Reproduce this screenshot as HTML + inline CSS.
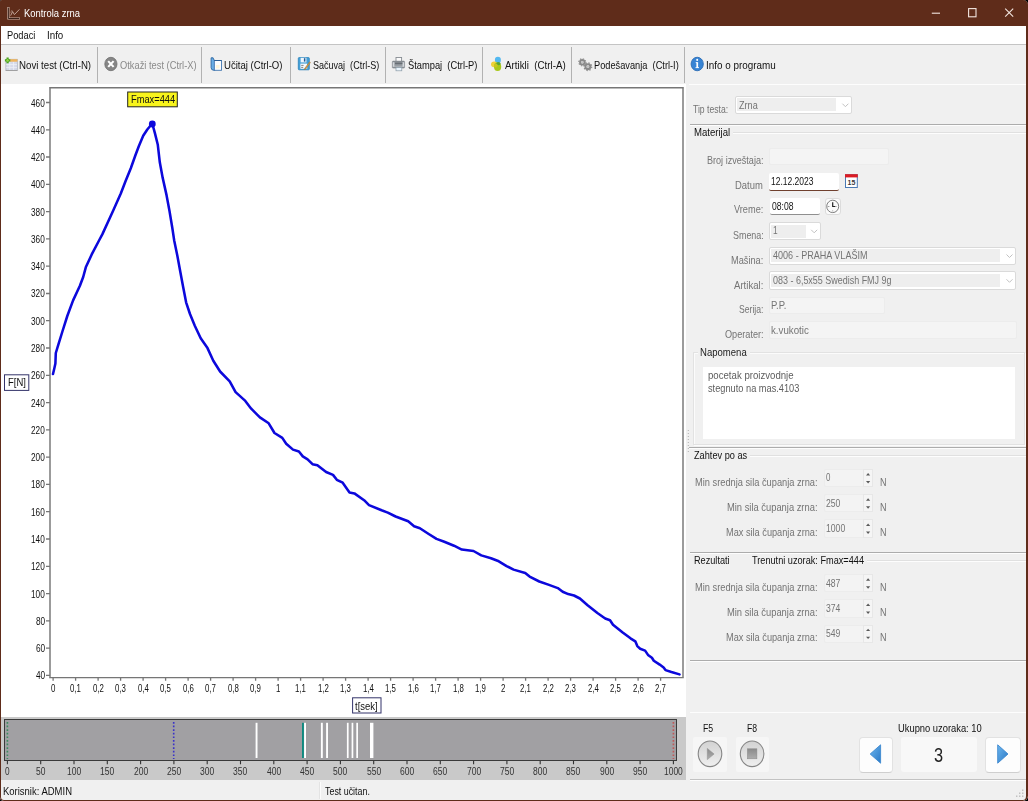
<!DOCTYPE html>
<html lang="sr"><head><meta charset="utf-8"><title>Kontrola zrna</title>
<style>
html,body{margin:0;padding:0;background:#000;}
body{width:1028px;height:801px;overflow:hidden;position:relative;font-family:"Liberation Sans", sans-serif;}
#win{position:absolute;left:0;top:0;width:1028px;height:801px;background:#f0f0f0;border-radius:2px 5px 5px 4px;overflow:hidden;}
.a{position:absolute;}
.t{position:absolute;white-space:pre;line-height:1;transform-origin:0 50%;display:block;}
.sep{position:absolute;top:47px;width:1px;height:36px;background:#b2b2b2;}
.cb{position:absolute;background:#fff;border:1px solid #dadada;box-sizing:border-box;border-radius:2px;}
.cb i{position:absolute;left:1.5px;top:1.5px;bottom:1.5px;background:#eeeeee;}
.fld{position:absolute;background:#f4f4f4;border:1px solid #ececec;box-sizing:border-box;border-radius:2px;}
.hl{position:absolute;height:1px;background:#acacac;}
.wl{position:absolute;height:1px;background:#fdfdfd;}
svg{position:absolute;left:0;top:0;overflow:visible;}
</style></head><body><div id="win">
<div class="a" style="left:0;top:0;width:1028px;height:26px;background:#5f2c1a"></div>
<div class="a" style="left:1px;top:26px;width:1026px;height:18px;background:#fff"></div>
<div class="a" style="left:1px;top:44px;width:1026px;height:1px;background:#c4c4c4"></div>
<div class="sep" style="left:97.3px"></div><div class="sep" style="left:201.0px"></div><div class="sep" style="left:290.3px"></div><div class="sep" style="left:384.7px"></div><div class="sep" style="left:482.2px"></div><div class="sep" style="left:571.2px"></div><div class="sep" style="left:683.5px"></div>
<div class="a" style="left:1px;top:84px;width:685px;height:633px;background:#fff"></div>
<div class="a" style="left:1px;top:717px;width:685px;height:63px;background:#c9c9c9"></div>
<div class="a" style="left:4px;top:719px;width:673px;height:42px;background:#a1a0a3;border:1px solid #3a3a3a;box-sizing:border-box"></div>
<div class="a" style="left:319px;top:782px;width:1px;height:17px;background:#e3e3e3"></div><div class="a" style="left:320px;top:782px;width:1px;height:17px;background:#fcfcfc"></div>
<div class="wl" style="left:689px;top:84px;width:337px"></div>
<div class="cb" style="left:734.5px;top:95.6px;width:117.7px;height:18.4px"><i style="width:99.1px"></i></div>
<div class="hl" style="left:690px;top:124px;width:336px"></div><div class="wl" style="left:690px;top:125px;width:336px"></div>
<div class="wl" style="left:733px;top:132px;width:293px;background:#e0e0e0"></div><div class="wl" style="left:733px;top:133px;width:293px"></div>
<div class="fld" style="left:768.5px;top:147.5px;width:120px;height:17.5px"></div>
<div class="a" style="left:768.5px;top:173px;width:70px;height:17.5px;background:#fff;border-radius:2px;border-bottom:1.5px solid #70402e;box-sizing:border-box"></div>
<div class="a" style="left:770px;top:197.7px;width:50px;height:17.5px;background:#fff;border-radius:2px;border-bottom:1.5px solid #8f8f8f;box-sizing:border-box"></div>
<div class="a" style="left:825px;top:198px;width:15.5px;height:17.2px;background:#fbfbfb;border:1px solid #dcdcdc;border-radius:3px;box-sizing:border-box"></div>
<div class="cb" style="left:768.5px;top:222.0px;width:52.9px;height:18.2px"><i style="width:34.5px"></i></div>
<div class="cb" style="left:768.5px;top:246.6px;width:247.8px;height:18.4px"><i style="width:228.7px"></i></div>
<div class="cb" style="left:768.5px;top:271.3px;width:247.8px;height:18.5px"><i style="width:228.7px"></i></div>
<div class="fld" style="left:768.5px;top:296.8px;width:116px;height:17.5px"></div>
<div class="fld" style="left:768.5px;top:321px;width:248px;height:17.5px"></div>
<div class="a" style="left:693px;top:352px;width:331.5px;height:93px;border:1px solid #e2e2e2;box-sizing:border-box;box-shadow:1px 1px 0 #fbfbfb, inset 1px 1px 0 #fbfbfb"></div>
<div class="a" style="left:698px;top:346px;width:52px;height:13px;background:#f0f0f0"></div>
<div class="a" style="left:703.3px;top:366.8px;width:311.3px;height:72.2px;background:#fff"></div>
<div class="hl" style="left:689px;top:447px;width:337px"></div><div class="wl" style="left:689px;top:448px;width:337px"></div>
<div class="wl" style="left:750px;top:455px;width:276px;background:#e0e0e0"></div><div class="wl" style="left:750px;top:456px;width:276px"></div>
<div class="fld" style="left:823.7px;top:468.8px;width:49.8px;height:18.3px;background:#f3f3f3;border-color:#ececec"></div>
<div class="a" style="left:862.8px;top:468.8px;width:10.6px;height:18.3px;background:#f5f5f5;border:1px solid #e7e7e7;box-sizing:border-box"></div>
<div class="fld" style="left:823.7px;top:494.1px;width:49.8px;height:18.3px;background:#f3f3f3;border-color:#ececec"></div>
<div class="a" style="left:862.8px;top:494.1px;width:10.6px;height:18.3px;background:#f5f5f5;border:1px solid #e7e7e7;box-sizing:border-box"></div>
<div class="fld" style="left:823.7px;top:519.4px;width:49.8px;height:18.3px;background:#f3f3f3;border-color:#ececec"></div>
<div class="a" style="left:862.8px;top:519.4px;width:10.6px;height:18.3px;background:#f5f5f5;border:1px solid #e7e7e7;box-sizing:border-box"></div>
<div class="fld" style="left:823.7px;top:574.1px;width:49.8px;height:18.3px;background:#f3f3f3;border-color:#ececec"></div>
<div class="a" style="left:862.8px;top:574.1px;width:10.6px;height:18.3px;background:#f5f5f5;border:1px solid #e7e7e7;box-sizing:border-box"></div>
<div class="fld" style="left:823.7px;top:599.4px;width:49.8px;height:18.3px;background:#f3f3f3;border-color:#ececec"></div>
<div class="a" style="left:862.8px;top:599.4px;width:10.6px;height:18.3px;background:#f5f5f5;border:1px solid #e7e7e7;box-sizing:border-box"></div>
<div class="fld" style="left:823.7px;top:624.5px;width:49.8px;height:18.3px;background:#f3f3f3;border-color:#ececec"></div>
<div class="a" style="left:862.8px;top:624.5px;width:10.6px;height:18.3px;background:#f5f5f5;border:1px solid #e7e7e7;box-sizing:border-box"></div>
<div class="hl" style="left:690px;top:552px;width:336px"></div><div class="wl" style="left:690px;top:553px;width:336px"></div>
<div class="wl" style="left:867px;top:560px;width:159px;background:#e0e0e0"></div><div class="wl" style="left:867px;top:561px;width:159px"></div>
<div class="hl" style="left:690px;top:660px;width:336px"></div><div class="wl" style="left:690px;top:661px;width:336px"></div>
<div class="wl" style="left:690px;top:712px;width:336px"></div>
<div class="hl" style="left:690px;top:779px;width:336px;background:#c2c2c2"></div><div class="wl" style="left:690px;top:780px;width:336px"></div>
<div class="a" style="left:1025.5px;top:84px;width:1px;height:696px;background:#fafafa"></div>
<div class="a" style="left:693.3px;top:737px;width:33.9px;height:35.2px;background:#f6f6f6;border-radius:2px"></div>
<div class="a" style="left:735.6px;top:737px;width:33.4px;height:35.2px;background:#f6f6f6;border-radius:2px"></div>
<div class="a" style="left:858.7px;top:736.6px;width:34.5px;height:36.4px;background:#fdfdfd;border:1px solid #e2e2e2;border-bottom-color:#cfcfcf;border-radius:4px;box-sizing:border-box"></div>
<div class="a" style="left:901px;top:736.6px;width:75.8px;height:35.8px;background:#f8f8f8;border-radius:3px"></div>
<div class="a" style="left:985.2px;top:736.6px;width:35.4px;height:36.4px;background:#fdfdfd;border:1px solid #e2e2e2;border-bottom-color:#cfcfcf;border-radius:4px;box-sizing:border-box"></div>
<svg width="1028" height="801" viewBox="0 0 1028 801">
<g fill="none"><path d="M8.4 7V18.5H20" stroke="#cfb6ab" stroke-width="2.2"/><path d="M8.4 7.6V18.5H19.4" stroke="#2a120a" stroke-width="0.9"/><path d="M10.6 15.6L12.6 11.6L14.4 14.6L19.4 9.4" stroke="#c9aea3" stroke-width="0.9"/><path d="M10.6 12.6L11.8 10.4L13 12.4" stroke="#a88a7e" stroke-width="0.7"/></g>
<g fill="none" stroke="#f3e6e0" stroke-width="1.1"><path d="M931.8 13.2H940"/><rect x="968.6" y="8.6" width="7.4" height="8.2"/><path d="M1005.2 8.7L1013.2 16.7M1013.2 8.7L1005.2 16.7"/></g>
<g fill="none" stroke="#767676" stroke-width="1.45"><path d="M50 87.8V677.6M49.2 87.8H683.8M683 87.8V677.6M49.2 677.6H683.8"/></g>
<path d="M46 675.4H50M46 648.1H50M46 620.8H50M46 593.6H50M46 566.3H50M46 539.0H50M46 511.7H50M46 484.4H50M46 457.1H50M46 429.9H50M46 402.6H50M46 375.3H50M46 348.0H50M46 320.7H50M46 293.5H50M46 266.2H50M46 238.9H50M46 211.6H50M46 184.3H50M46 157.0H50M46 129.8H50M46 102.5H50M53.1 677.6V680.8M75.6 677.6V680.8M98.1 677.6V680.8M120.6 677.6V680.8M143.1 677.6V680.8M165.6 677.6V680.8M188.1 677.6V680.8M210.6 677.6V680.8M233.1 677.6V680.8M255.6 677.6V680.8M278.1 677.6V680.8M300.6 677.6V680.8M323.1 677.6V680.8M345.6 677.6V680.8M368.1 677.6V680.8M390.6 677.6V680.8M413.1 677.6V680.8M435.6 677.6V680.8M458.1 677.6V680.8M480.6 677.6V680.8M503.1 677.6V680.8M525.6 677.6V680.8M548.1 677.6V680.8M570.6 677.6V680.8M593.1 677.6V680.8M615.6 677.6V680.8M638.1 677.6V680.8M660.6 677.6V680.8" fill="none" stroke="#767676" stroke-width="1.3"/>
<path d="M53.0 374.0 L54.3 368.5 L55.4 363.5 L55.8 353.0 L58.5 344.2 L62.4 331.5 L67.3 316.0 L73.1 300.4 L79.9 285.8 L83.2 277.0 L85.8 267.3 L91.6 254.7 L99.3 240.0 L102.3 234.4 L113.0 211.0 L120.8 193.5 L125.7 180.8 L130.8 168.2 L135.5 155.0 L138.8 146.2 L143.2 135.8 L147.3 129.5 L150.8 125.3 L152.4 124.0 L154.9 133.1 L157.8 144.8 L159.8 162.3 L162.7 177.9 L166.6 195.4 L169.5 211.0 L172.4 228.5 L174.2 240.5 L177.3 255.6 L180.2 271.2 L183.1 286.7 L186.1 302.3 L190.0 314.0 L194.8 325.7 L200.7 338.3 L207.5 348.1 L213.3 360.7 L220.1 371.5 L229.7 381.4 L235.6 392.1 L245.3 400.9 L251.2 408.7 L259.9 417.4 L268.7 423.3 L274.5 433.0 L282.3 437.9 L286.2 443.7 L293.0 449.6 L298.9 451.5 L302.8 456.4 L307.6 459.3 L312.5 464.2 L317.4 465.2 L326.1 472.0 L333.0 474.9 L336.8 479.8 L342.7 482.7 L349.5 492.4 L354.4 493.4 L364.1 500.2 L369.0 505.1 L381.6 510.3 L387.8 512.6 L395.6 516.5 L408.2 521.3 L414.1 526.2 L419.9 528.2 L428.7 534.0 L436.5 538.9 L444.3 541.8 L454.0 545.7 L461.8 549.6 L473.5 551.0 L481.3 555.4 L491.0 558.3 L498.8 561.3 L506.6 566.1 L513.6 569.6 L525.2 573.0 L529.6 576.6 L539.3 581.5 L549.0 584.9 L557.8 588.1 L562.7 591.8 L568.2 594.1 L574.0 595.5 L579.9 598.5 L587.6 605.2 L597.4 613.0 L605.2 618.5 L610.0 620.2 L613.0 624.7 L622.7 632.5 L630.5 638.3 L635.3 641.3 L637.3 646.1 L640.2 648.7 L645.1 650.6 L648.0 654.9 L651.9 657.8 L653.8 660.7 L659.7 664.6 L663.6 667.5 L665.5 670.1 L671.4 672.0 L679.5 674.4" fill="none" stroke="#0c08dc" stroke-width="2.55" stroke-linejoin="round" stroke-linecap="round"/>
<circle cx="152.3" cy="124" r="3.4" fill="#0c08dc"/>
<rect x="127.7" y="92" width="49.6" height="14.8" fill="#f8f41c" stroke="#222" stroke-width="1"/>
<rect x="4.5" y="374.8" width="24.3" height="15.6" fill="#fff" stroke="#33336a" stroke-width="1"/>
<rect x="352.6" y="697.8" width="28.4" height="15.2" fill="#fff" stroke="#33336a" stroke-width="1"/>
<path d="M7.4 761V764.3M40.7 761V764.3M74.0 761V764.3M107.3 761V764.3M140.6 761V764.3M173.9 761V764.3M207.2 761V764.3M240.5 761V764.3M273.8 761V764.3M307.1 761V764.3M340.4 761V764.3M373.7 761V764.3M407.0 761V764.3M440.3 761V764.3M473.6 761V764.3M506.9 761V764.3M540.2 761V764.3M573.5 761V764.3M606.8 761V764.3M640.1 761V764.3M673.4 761V764.3" fill="none" stroke="#333" stroke-width="1.1"/>
<rect x="255.6" y="722.8" width="1.9" height="35.2" fill="#fff"/>
<rect x="302.0" y="722.8" width="1.9" height="35.2" fill="#0e8a80"/>
<rect x="304.1" y="722.8" width="1.9" height="35.2" fill="#fff"/>
<rect x="320.9" y="722.8" width="1.9" height="35.2" fill="#fff"/>
<rect x="326.1" y="722.8" width="1.9" height="35.2" fill="#fff"/>
<rect x="346.9" y="722.8" width="1.7" height="35.2" fill="#fff"/>
<rect x="351.6" y="722.8" width="1.7" height="35.2" fill="#fff"/>
<rect x="356.3" y="722.8" width="1.7" height="35.2" fill="#fff"/>
<rect x="370.0" y="722.8" width="3.4" height="35.2" fill="#fff"/>
<path d="M7.4 722V759" stroke="#3c8c60" stroke-width="1.6" stroke-dasharray="1.7 1.9" fill="none"/>
<path d="M173.7 722V759" stroke="#3a32c8" stroke-width="1.6" stroke-dasharray="1.7 1.9" fill="none"/>
<path d="M673.4 722V759" stroke="#c05858" stroke-width="1.6" stroke-dasharray="1.7 1.9" fill="none"/>
<path d="M688.3 430V452" stroke="#b0b0b0" stroke-width="1" stroke-dasharray="1 2" fill="none"/>
<g><rect x="5.9" y="59.3" width="11.4" height="11" fill="#d6daea" stroke="#aeb2bc" stroke-width="0.8"/><rect x="9.6" y="59.2" width="7.8" height="2.5" fill="#efb45c"/><path d="M6.2 64.6H17M6.2 67.4H17M9.8 62V70M13.6 62V70" stroke="#eef0f6" stroke-width="0.8" fill="none"/><path d="M5.7 70.5H17.5" stroke="#9c9c9c" stroke-width="0.9"/><path d="M4.9 60.4H10.3M7.6 57.6V63.2" stroke="#4aa41e" stroke-width="2.2" fill="none"/><path d="M6.2 60.4H9M7.6 59V61.8" stroke="#9ad84a" stroke-width="0.9" fill="none"/></g>
<g><ellipse cx="110.9" cy="64" rx="6.1" ry="6.7" fill="#868686" stroke="#6e6e6e" stroke-width="0.8"/><path d="M108.2 61.1L113.6 66.9M113.6 61.1L108.2 66.9" stroke="#fff" stroke-width="2.1" fill="none"/></g>
<g><path d="M211.1 57.8V67.6Q211.1 70.3 214 70.3H215V60.5Q213.4 60.3 213.1 57.8Z" fill="#69aee6" stroke="#2d66a0" stroke-width="0.9" stroke-linejoin="round"/><rect x="214.3" y="60.5" width="7.2" height="9.8" fill="#fbfdff" stroke="#4176b0" stroke-width="0.9"/><path d="M214.3 60.5H221.5" stroke="#2d5f94" stroke-width="1"/><rect x="216" y="65" width="3.6" height="3.4" fill="#fdf6dc"/></g>
<g><rect x="298.3" y="57.6" width="11" height="12.2" rx="0.8" fill="#43a0d8" stroke="#2a82ba" stroke-width="0.8"/><rect x="300.6" y="57.8" width="5.8" height="4.6" fill="#eef6fc"/><rect x="303.9" y="58.2" width="1.5" height="3.4" fill="#245a94"/><rect x="300.4" y="63.6" width="6.8" height="5.2" fill="#f6fafd"/><path d="M301.2 65.4H303.6M301.2 67.4H303.2" stroke="#666" stroke-width="0.8"/><path d="M309.6 61.8L305 68L304.2 69.6L305.8 69L310.4 62.6Z" fill="#d9a24a" stroke="#9c6a2c" stroke-width="0.5"/></g>
<g><rect x="396" y="57.5" width="5.6" height="4.4" fill="#fbfbfb" stroke="#868c92" stroke-width="0.9"/><rect x="392.3" y="61.1" width="12.3" height="7" rx="0.8" fill="#8b9197" stroke="#787e84" stroke-width="0.5"/><rect x="392.8" y="62.2" width="1.6" height="4.6" fill="#d4d8dc"/><rect x="402.5" y="62.2" width="1.6" height="4.6" fill="#d4d8dc"/><path d="M395 63.3H402.4" stroke="#5a6066" stroke-width="0.9"/><path d="M394 66.2H403" stroke="#c9cdd1" stroke-width="0.7"/><rect x="396" y="67.4" width="5.8" height="3.4" fill="#eaf4fc" stroke="#8a9aa6" stroke-width="0.7"/></g>
<g><ellipse cx="497.9" cy="60" rx="3" ry="3.2" fill="#52b8f0"/><ellipse cx="494.2" cy="64.3" rx="3.2" ry="2.9" fill="#efd13a"/><ellipse cx="497.6" cy="66.8" rx="3.6" ry="4.2" fill="#a9c81a"/><ellipse cx="498.4" cy="63.6" rx="2.2" ry="1.6" fill="#4f9e3a" opacity="0.85"/><ellipse cx="495.8" cy="65.6" rx="1.8" ry="2" fill="#c9c61e"/></g>
<g fill="none"><circle cx="582.3" cy="62.3" r="2.2" stroke="#8a8a8a" stroke-width="2"/><circle cx="582.3" cy="62.3" r="3.5" stroke="#8f8f8f" stroke-width="1.2" stroke-dasharray="1.3 1.45"/><circle cx="582.3" cy="62.3" r="1.2" fill="#c2c2c2" stroke="none"/><circle cx="587.9" cy="66.7" r="2.4" stroke="#8a8a8a" stroke-width="2.1"/><circle cx="587.9" cy="66.7" r="3.8" stroke="#8f8f8f" stroke-width="1.3" stroke-dasharray="1.4 1.58"/><circle cx="587.9" cy="66.7" r="1.4" fill="#c2c2c2" stroke="none"/></g>
<g><ellipse cx="697.2" cy="64" rx="6.1" ry="6.75" fill="#3884d4" stroke="#2a6cb4" stroke-width="0.9"/><rect x="696.4" y="62.2" width="1.7" height="5.6" fill="#fff"/><rect x="695.7" y="62.2" width="1.6" height="0.9" fill="#fff"/><rect x="695.5" y="67.2" width="3.5" height="0.9" fill="#fff"/><ellipse cx="697.2" cy="59.9" rx="1" ry="1.1" fill="#fff"/></g>
<path d="M842.4 103.7L845.4 106.7L848.4 103.7" fill="none" stroke="#c2c2c2" stroke-width="1"/>
<path d="M811.2 229.8L814.2 232.8L817.2 229.8" fill="none" stroke="#c2c2c2" stroke-width="1"/>
<path d="M1006.5 254.5L1009.5 257.5L1012.5 254.5" fill="none" stroke="#c2c2c2" stroke-width="1"/>
<path d="M1006.5 279.3L1009.5 282.3L1012.5 279.3" fill="none" stroke="#c2c2c2" stroke-width="1"/>
<g><rect x="845.5" y="174.7" width="11.8" height="12.8" fill="#fff" stroke="#4a7ab4" stroke-width="1"/><rect x="845" y="174.2" width="12.8" height="3.2" fill="#dc1c24"/></g>
<text x="851.5" y="184.7" font-family='"Liberation Sans", sans-serif' font-size="7.4" font-weight="bold" fill="#3a3a3a" text-anchor="middle" textLength="7.8" lengthAdjust="spacingAndGlyphs">15</text>
<g fill="none"><ellipse cx="832.7" cy="206.4" rx="6" ry="6.2" stroke="#707070" stroke-width="0.9"/><path d="M832.7 202.2V206.5H835" stroke="#222" stroke-width="1.2"/><path d="M835 206.5H836.6M827.6 206.5H829.4M832.7 210.4V211.4" stroke="#777" stroke-width="0.7"/></g>
<path d="M866 475.4L868.1 473.0L870.2 475.4Z" fill="#5a5a5a"/>
<path d="M866 481.0L868.1 483.4L870.2 481.0Z" fill="#5a5a5a"/>
<path d="M866 500.7L868.1 498.3L870.2 500.7Z" fill="#5a5a5a"/>
<path d="M866 506.3L868.1 508.7L870.2 506.3Z" fill="#5a5a5a"/>
<path d="M866 526.0L868.1 523.6L870.2 526.0Z" fill="#5a5a5a"/>
<path d="M866 531.6L868.1 534.0L870.2 531.6Z" fill="#5a5a5a"/>
<path d="M866 580.7L868.1 578.3L870.2 580.7Z" fill="#5a5a5a"/>
<path d="M866 586.3L868.1 588.7L870.2 586.3Z" fill="#5a5a5a"/>
<path d="M866 606.0L868.1 603.6L870.2 606.0Z" fill="#5a5a5a"/>
<path d="M866 611.6L868.1 614.0L870.2 611.6Z" fill="#5a5a5a"/>
<path d="M866 631.1L868.1 628.7L870.2 631.1Z" fill="#5a5a5a"/>
<path d="M866 636.7L868.1 639.1L870.2 636.7Z" fill="#5a5a5a"/>
<defs><linearGradient id="gb" x1="0" y1="0" x2="0" y2="1"><stop offset="0" stop-color="#d2d2d2"/><stop offset="1" stop-color="#efefef"/></linearGradient><linearGradient id="gd" x1="0" y1="0" x2="0" y2="1"><stop offset="0" stop-color="#8a8a8a"/><stop offset="1" stop-color="#adadad"/></linearGradient><linearGradient id="bl" x1="0" y1="0" x2="1" y2="1"><stop offset="0" stop-color="#6cb6ee"/><stop offset="1" stop-color="#2a78c6"/></linearGradient></defs>
<ellipse cx="710" cy="753.8" rx="11.8" ry="12.8" fill="url(#gb)" stroke="#858585" stroke-width="1.1"/>
<path d="M707.3 748.4L714.1 754L707.3 759.6Z" fill="url(#gd)" stroke="#8f8f8f" stroke-width="0.5"/>
<ellipse cx="752.1" cy="753.8" rx="11.8" ry="12.8" fill="url(#gb)" stroke="#858585" stroke-width="1.1"/>
<rect x="747.4" y="748.8" width="9.5" height="10" fill="url(#gd)" stroke="#888" stroke-width="0.5"/>
<path d="M870.2 754L880.6 744.8V763.2Z" fill="url(#bl)" stroke="#3f8ad0" stroke-width="0.9" stroke-linejoin="round"/>
<path d="M1008 754L997.7 744.8V763.2Z" fill="url(#bl)" stroke="#3f8ad0" stroke-width="0.9" stroke-linejoin="round"/>
<g fill="#bdbdbd"><rect x="1022" y="795.5" width="1.4" height="1.4"/><rect x="1019" y="795.5" width="1.4" height="1.4"/><rect x="1016" y="795.5" width="1.4" height="1.4"/><rect x="1022" y="792.5" width="1.4" height="1.4"/><rect x="1019" y="792.5" width="1.4" height="1.4"/><rect x="1022" y="789.5" width="1.4" height="1.4"/></g>
</svg>
<div id="txt" style="position:absolute;left:0;top:0;width:1028px;height:801px;will-change:transform">
<span class="t" id="t0" style="left:24.30px;top:7.73px;font-size:11px;color:#fff;transform:scaleX(0.8558);">Kontrola zrna</span>
<span class="t" id="t1" style="left:6.60px;top:29.53px;font-size:11px;color:#111;transform:scaleX(0.8442);">Podaci</span>
<span class="t" id="t2" style="left:46.70px;top:29.53px;font-size:11px;color:#111;transform:scaleX(0.8878);">Info</span>
<span class="t" id="t3" style="left:19.40px;top:59.63px;font-size:11px;color:#111;transform:scaleX(0.8804);">Novi test (Ctrl-N)</span>
<span class="t" id="t4" style="left:119.70px;top:59.63px;font-size:11px;color:#8a8a8a;transform:scaleX(0.8468);">Otkaži test (Ctrl-X)</span>
<span class="t" id="t5" style="left:223.70px;top:59.63px;font-size:11px;color:#111;transform:scaleX(0.8703);">Učitaj (Ctrl-O)</span>
<span class="t" id="t6" style="left:312.90px;top:59.63px;font-size:11px;color:#111;transform:scaleX(0.8204);">Sačuvaj  (Ctrl-S)</span>
<span class="t" id="t7" style="left:407.50px;top:59.63px;font-size:11px;color:#111;transform:scaleX(0.8473);">Štampaj  (Ctrl-P)</span>
<span class="t" id="t8" style="left:505.00px;top:59.63px;font-size:11px;color:#111;transform:scaleX(0.8869);">Artikli  (Ctrl-A)</span>
<span class="t" id="t9" style="left:593.75px;top:59.63px;font-size:11px;color:#111;transform:scaleX(0.8401);">Podešavanja  (Ctrl-I)</span>
<span class="t" id="t10" style="left:706.00px;top:59.63px;font-size:11px;color:#111;transform:scaleX(0.8982);">Info o programu</span>
<span class="t" id="t11" style="left:35.70px;top:670.43px;font-size:11px;color:#111;transform:scaleX(0.7510);">40</span>
<span class="t" id="t12" style="left:35.70px;top:643.14px;font-size:11px;color:#111;transform:scaleX(0.7510);">60</span>
<span class="t" id="t13" style="left:35.70px;top:615.86px;font-size:11px;color:#111;transform:scaleX(0.7510);">80</span>
<span class="t" id="t14" style="left:31.15px;top:588.58px;font-size:11px;color:#111;transform:scaleX(0.7489);">100</span>
<span class="t" id="t15" style="left:31.15px;top:561.30px;font-size:11px;color:#111;transform:scaleX(0.7489);">120</span>
<span class="t" id="t16" style="left:31.15px;top:534.02px;font-size:11px;color:#111;transform:scaleX(0.7489);">140</span>
<span class="t" id="t17" style="left:31.15px;top:506.73px;font-size:11px;color:#111;transform:scaleX(0.7489);">160</span>
<span class="t" id="t18" style="left:31.15px;top:479.45px;font-size:11px;color:#111;transform:scaleX(0.7489);">180</span>
<span class="t" id="t19" style="left:31.15px;top:452.17px;font-size:11px;color:#111;transform:scaleX(0.7489);">200</span>
<span class="t" id="t20" style="left:31.15px;top:424.89px;font-size:11px;color:#111;transform:scaleX(0.7489);">220</span>
<span class="t" id="t21" style="left:31.15px;top:397.61px;font-size:11px;color:#111;transform:scaleX(0.7489);">240</span>
<span class="t" id="t22" style="left:31.15px;top:370.32px;font-size:11px;color:#111;transform:scaleX(0.7489);">260</span>
<span class="t" id="t23" style="left:31.15px;top:343.04px;font-size:11px;color:#111;transform:scaleX(0.7489);">280</span>
<span class="t" id="t24" style="left:31.15px;top:315.76px;font-size:11px;color:#111;transform:scaleX(0.7489);">300</span>
<span class="t" id="t25" style="left:31.15px;top:288.48px;font-size:11px;color:#111;transform:scaleX(0.7489);">320</span>
<span class="t" id="t26" style="left:31.15px;top:261.20px;font-size:11px;color:#111;transform:scaleX(0.7489);">340</span>
<span class="t" id="t27" style="left:31.15px;top:233.91px;font-size:11px;color:#111;transform:scaleX(0.7489);">360</span>
<span class="t" id="t28" style="left:31.15px;top:206.63px;font-size:11px;color:#111;transform:scaleX(0.7489);">380</span>
<span class="t" id="t29" style="left:31.15px;top:179.35px;font-size:11px;color:#111;transform:scaleX(0.7489);">400</span>
<span class="t" id="t30" style="left:31.15px;top:152.07px;font-size:11px;color:#111;transform:scaleX(0.7489);">420</span>
<span class="t" id="t31" style="left:31.15px;top:124.79px;font-size:11px;color:#111;transform:scaleX(0.7489);">440</span>
<span class="t" id="t32" style="left:31.15px;top:97.50px;font-size:11px;color:#111;transform:scaleX(0.7489);">460</span>
<span class="t" id="t33" style="left:50.90px;top:682.93px;font-size:11px;color:#111;transform:scaleX(0.7184);">0</span>
<span class="t" id="t34" style="left:70.15px;top:682.93px;font-size:11px;color:#111;transform:scaleX(0.7126);">0,1</span>
<span class="t" id="t35" style="left:92.65px;top:682.93px;font-size:11px;color:#111;transform:scaleX(0.7126);">0,2</span>
<span class="t" id="t36" style="left:115.15px;top:682.93px;font-size:11px;color:#111;transform:scaleX(0.7126);">0,3</span>
<span class="t" id="t37" style="left:137.65px;top:682.93px;font-size:11px;color:#111;transform:scaleX(0.7126);">0,4</span>
<span class="t" id="t38" style="left:160.15px;top:682.93px;font-size:11px;color:#111;transform:scaleX(0.7126);">0,5</span>
<span class="t" id="t39" style="left:182.65px;top:682.93px;font-size:11px;color:#111;transform:scaleX(0.7126);">0,6</span>
<span class="t" id="t40" style="left:205.15px;top:682.93px;font-size:11px;color:#111;transform:scaleX(0.7126);">0,7</span>
<span class="t" id="t41" style="left:227.65px;top:682.93px;font-size:11px;color:#111;transform:scaleX(0.7126);">0,8</span>
<span class="t" id="t42" style="left:250.15px;top:682.93px;font-size:11px;color:#111;transform:scaleX(0.7126);">0,9</span>
<span class="t" id="t43" style="left:275.90px;top:682.93px;font-size:11px;color:#111;transform:scaleX(0.7184);">1</span>
<span class="t" id="t44" style="left:295.15px;top:682.93px;font-size:11px;color:#111;transform:scaleX(0.7126);">1,1</span>
<span class="t" id="t45" style="left:317.65px;top:682.93px;font-size:11px;color:#111;transform:scaleX(0.7126);">1,2</span>
<span class="t" id="t46" style="left:340.15px;top:682.93px;font-size:11px;color:#111;transform:scaleX(0.7126);">1,3</span>
<span class="t" id="t47" style="left:362.65px;top:682.93px;font-size:11px;color:#111;transform:scaleX(0.7126);">1,4</span>
<span class="t" id="t48" style="left:385.15px;top:682.93px;font-size:11px;color:#111;transform:scaleX(0.7126);">1,5</span>
<span class="t" id="t49" style="left:407.65px;top:682.93px;font-size:11px;color:#111;transform:scaleX(0.7126);">1,6</span>
<span class="t" id="t50" style="left:430.15px;top:682.93px;font-size:11px;color:#111;transform:scaleX(0.7126);">1,7</span>
<span class="t" id="t51" style="left:452.65px;top:682.93px;font-size:11px;color:#111;transform:scaleX(0.7126);">1,8</span>
<span class="t" id="t52" style="left:475.15px;top:682.93px;font-size:11px;color:#111;transform:scaleX(0.7126);">1,9</span>
<span class="t" id="t53" style="left:500.90px;top:682.93px;font-size:11px;color:#111;transform:scaleX(0.7184);">2</span>
<span class="t" id="t54" style="left:520.15px;top:682.93px;font-size:11px;color:#111;transform:scaleX(0.7126);">2,1</span>
<span class="t" id="t55" style="left:542.65px;top:682.93px;font-size:11px;color:#111;transform:scaleX(0.7126);">2,2</span>
<span class="t" id="t56" style="left:565.15px;top:682.93px;font-size:11px;color:#111;transform:scaleX(0.7126);">2,3</span>
<span class="t" id="t57" style="left:587.65px;top:682.93px;font-size:11px;color:#111;transform:scaleX(0.7126);">2,4</span>
<span class="t" id="t58" style="left:610.15px;top:682.93px;font-size:11px;color:#111;transform:scaleX(0.7126);">2,5</span>
<span class="t" id="t59" style="left:632.65px;top:682.93px;font-size:11px;color:#111;transform:scaleX(0.7126);">2,6</span>
<span class="t" id="t60" style="left:655.15px;top:682.93px;font-size:11px;color:#111;transform:scaleX(0.7126);">2,7</span>
<span class="t" id="t61" style="left:7.75px;top:377.13px;font-size:11px;color:#111;transform:scaleX(0.8589);">F[N]</span>
<span class="t" id="t62" style="left:355.40px;top:700.63px;font-size:11px;color:#111;transform:scaleX(0.8632);">t[sek]</span>
<span class="t" id="t63" style="left:130.60px;top:94.13px;font-size:11px;color:#111;transform:scaleX(0.8445);">Fmax=444</span>
<span class="t" id="t64" style="left:5.10px;top:766.13px;font-size:11px;color:#333;transform:scaleX(0.7510);">0</span>
<span class="t" id="t65" style="left:36.00px;top:766.13px;font-size:11px;color:#333;transform:scaleX(0.7673);">50</span>
<span class="t" id="t66" style="left:66.90px;top:766.13px;font-size:11px;color:#333;transform:scaleX(0.7734);">100</span>
<span class="t" id="t67" style="left:100.20px;top:766.13px;font-size:11px;color:#333;transform:scaleX(0.7734);">150</span>
<span class="t" id="t68" style="left:133.50px;top:766.13px;font-size:11px;color:#333;transform:scaleX(0.7734);">200</span>
<span class="t" id="t69" style="left:166.80px;top:766.13px;font-size:11px;color:#333;transform:scaleX(0.7734);">250</span>
<span class="t" id="t70" style="left:200.10px;top:766.13px;font-size:11px;color:#333;transform:scaleX(0.7734);">300</span>
<span class="t" id="t71" style="left:233.40px;top:766.13px;font-size:11px;color:#333;transform:scaleX(0.7734);">350</span>
<span class="t" id="t72" style="left:266.70px;top:766.13px;font-size:11px;color:#333;transform:scaleX(0.7734);">400</span>
<span class="t" id="t73" style="left:300.00px;top:766.13px;font-size:11px;color:#333;transform:scaleX(0.7734);">450</span>
<span class="t" id="t74" style="left:333.30px;top:766.13px;font-size:11px;color:#333;transform:scaleX(0.7734);">500</span>
<span class="t" id="t75" style="left:366.60px;top:766.13px;font-size:11px;color:#333;transform:scaleX(0.7734);">550</span>
<span class="t" id="t76" style="left:399.90px;top:766.13px;font-size:11px;color:#333;transform:scaleX(0.7734);">600</span>
<span class="t" id="t77" style="left:433.20px;top:766.13px;font-size:11px;color:#333;transform:scaleX(0.7734);">650</span>
<span class="t" id="t78" style="left:466.50px;top:766.13px;font-size:11px;color:#333;transform:scaleX(0.7734);">700</span>
<span class="t" id="t79" style="left:499.80px;top:766.13px;font-size:11px;color:#333;transform:scaleX(0.7734);">750</span>
<span class="t" id="t80" style="left:533.10px;top:766.13px;font-size:11px;color:#333;transform:scaleX(0.7734);">800</span>
<span class="t" id="t81" style="left:566.40px;top:766.13px;font-size:11px;color:#333;transform:scaleX(0.7734);">850</span>
<span class="t" id="t82" style="left:599.70px;top:766.13px;font-size:11px;color:#333;transform:scaleX(0.7734);">900</span>
<span class="t" id="t83" style="left:633.00px;top:766.13px;font-size:11px;color:#333;transform:scaleX(0.7734);">950</span>
<span class="t" id="t84" style="left:664.00px;top:766.13px;font-size:11px;color:#333;transform:scaleX(0.7678);">1000</span>
<span class="t" id="t85" style="left:3.00px;top:785.63px;font-size:11px;color:#111;transform:scaleX(0.8617);">Korisnik: ADMIN</span>
<span class="t" id="t86" style="left:325.00px;top:785.63px;font-size:11px;color:#111;transform:scaleX(0.8070);">Test učitan.</span>
<span class="t" id="t87" style="left:692.60px;top:103.63px;font-size:11px;color:#747474;transform:scaleX(0.7827);">Tip testa:</span>
<span class="t" id="t88" style="left:738.80px;top:99.63px;font-size:11px;color:#747474;transform:scaleX(0.8265);">Zrna</span>
<span class="t" id="t89" style="left:694.00px;top:126.93px;font-size:11px;color:#111;transform:scaleX(0.8707);">Materijal</span>
<span class="t" id="t90" style="left:706.80px;top:154.63px;font-size:11px;color:#747474;transform:scaleX(0.8250);">Broj izveštaja:</span>
<span class="t" id="t91" style="left:734.90px;top:180.03px;font-size:11px;color:#747474;transform:scaleX(0.8579);">Datum</span>
<span class="t" id="t92" style="left:771.40px;top:176.03px;font-size:11px;color:#111;transform:scaleX(0.7719);">12.12.2023</span>
<span class="t" id="t93" style="left:734.00px;top:204.43px;font-size:11px;color:#747474;transform:scaleX(0.8360);">Vreme:</span>
<span class="t" id="t94" style="left:772.40px;top:200.53px;font-size:11px;color:#111;transform:scaleX(0.7773);">08:08</span>
<span class="t" id="t95" style="left:732.50px;top:229.53px;font-size:11px;color:#747474;transform:scaleX(0.8122);">Smena:</span>
<span class="t" id="t96" style="left:772.60px;top:225.03px;font-size:11px;color:#747474;transform:scaleX(0.7600);">1</span>
<span class="t" id="t97" style="left:731.00px;top:254.83px;font-size:11px;color:#747474;transform:scaleX(0.8383);">Mašina:</span>
<span class="t" id="t98" style="left:773.00px;top:250.33px;font-size:11px;color:#747474;transform:scaleX(0.8221);">4006 - PRAHA VLAŠIM</span>
<span class="t" id="t99" style="left:734.00px;top:279.53px;font-size:11px;color:#747474;transform:scaleX(0.8714);">Artikal:</span>
<span class="t" id="t100" style="left:773.00px;top:275.03px;font-size:11px;color:#747474;transform:scaleX(0.8143);">083 - 6,5x55 Swedish FMJ 9g</span>
<span class="t" id="t101" style="left:738.80px;top:304.13px;font-size:11px;color:#747474;transform:scaleX(0.7856);">Serija:</span>
<span class="t" id="t102" style="left:771.00px;top:300.03px;font-size:11px;color:#747474;transform:scaleX(0.8634);">P.P.</span>
<span class="t" id="t103" style="left:724.70px;top:329.03px;font-size:11px;color:#747474;transform:scaleX(0.8307);">Operater:</span>
<span class="t" id="t104" style="left:771.00px;top:325.13px;font-size:11px;color:#747474;transform:scaleX(0.8832);">k.vukotic</span>
<span class="t" id="t105" style="left:700.40px;top:347.03px;font-size:11px;color:#222;transform:scaleX(0.8676);">Napomena</span>
<span class="t" id="t106" style="left:707.60px;top:369.83px;font-size:11px;color:#5e5e5e;transform:scaleX(0.8749);">pocetak proizvodnje</span>
<span class="t" id="t107" style="left:707.60px;top:382.63px;font-size:11px;color:#5e5e5e;transform:scaleX(0.8396);">stegnuto na mas.4103</span>
<span class="t" id="t108" style="left:694.00px;top:450.33px;font-size:11px;color:#111;transform:scaleX(0.8350);">Zahtev po as</span>
<span class="t" id="t109" style="left:694.60px;top:476.73px;font-size:11px;color:#747474;transform:scaleX(0.8424);">Min srednja sila čupanja zrna:</span>
<span class="t" id="t110" style="left:825.50px;top:472.23px;font-size:11px;color:#747474;transform:scaleX(0.7184);">0</span>
<span class="t" id="t111" style="left:880.20px;top:476.73px;font-size:11px;color:#747474;transform:scaleX(0.8200);">N</span>
<span class="t" id="t112" style="left:726.70px;top:502.03px;font-size:11px;color:#747474;transform:scaleX(0.8506);">Min sila čupanja zrna:</span>
<span class="t" id="t113" style="left:825.50px;top:497.53px;font-size:11px;color:#747474;transform:scaleX(0.7843);">250</span>
<span class="t" id="t114" style="left:880.20px;top:502.03px;font-size:11px;color:#747474;transform:scaleX(0.8200);">N</span>
<span class="t" id="t115" style="left:725.70px;top:527.33px;font-size:11px;color:#747474;transform:scaleX(0.8360);">Max sila čupanja zrna:</span>
<span class="t" id="t116" style="left:825.50px;top:522.83px;font-size:11px;color:#747474;transform:scaleX(0.7842);">1000</span>
<span class="t" id="t117" style="left:880.20px;top:527.33px;font-size:11px;color:#747474;transform:scaleX(0.8200);">N</span>
<span class="t" id="t118" style="left:694.60px;top:582.03px;font-size:11px;color:#747474;transform:scaleX(0.8424);">Min srednja sila čupanja zrna:</span>
<span class="t" id="t119" style="left:825.50px;top:577.53px;font-size:11px;color:#747474;transform:scaleX(0.7843);">487</span>
<span class="t" id="t120" style="left:880.20px;top:582.03px;font-size:11px;color:#747474;transform:scaleX(0.8200);">N</span>
<span class="t" id="t121" style="left:726.70px;top:607.33px;font-size:11px;color:#747474;transform:scaleX(0.8506);">Min sila čupanja zrna:</span>
<span class="t" id="t122" style="left:825.50px;top:602.83px;font-size:11px;color:#747474;transform:scaleX(0.7843);">374</span>
<span class="t" id="t123" style="left:880.20px;top:607.33px;font-size:11px;color:#747474;transform:scaleX(0.8200);">N</span>
<span class="t" id="t124" style="left:725.70px;top:632.43px;font-size:11px;color:#747474;transform:scaleX(0.8360);">Max sila čupanja zrna:</span>
<span class="t" id="t125" style="left:825.50px;top:627.93px;font-size:11px;color:#747474;transform:scaleX(0.7843);">549</span>
<span class="t" id="t126" style="left:880.20px;top:632.43px;font-size:11px;color:#747474;transform:scaleX(0.8200);">N</span>
<span class="t" id="t127" style="left:694.00px;top:555.23px;font-size:11px;color:#111;transform:scaleX(0.8318);">Rezultati</span>
<span class="t" id="t128" style="left:752.40px;top:555.23px;font-size:11px;color:#111;transform:scaleX(0.8333);">Trenutni uzorak: Fmax=444</span>
<span class="t" id="t129" style="left:703.30px;top:723.23px;font-size:11px;color:#111;transform:scaleX(0.7942);">F5</span>
<span class="t" id="t130" style="left:746.70px;top:723.23px;font-size:11px;color:#111;transform:scaleX(0.7864);">F8</span>
<span class="t" id="t131" style="left:897.60px;top:723.33px;font-size:11px;color:#111;transform:scaleX(0.8502);">Ukupno uzoraka: 10</span>
<span class="t" id="t132" style="left:933.70px;top:746.07px;font-size:19.5px;color:#222;transform:scaleX(0.8400);">3</span>
</div>
<div class="a" style="left:0;top:0;width:1028px;height:801px;box-sizing:border-box;border:1px solid #5f2c1a;border-right-width:2px;border-bottom-width:1.5px;border-top:none;border-radius:2px 5px 5px 4px;pointer-events:none"></div>
</div></body></html>
